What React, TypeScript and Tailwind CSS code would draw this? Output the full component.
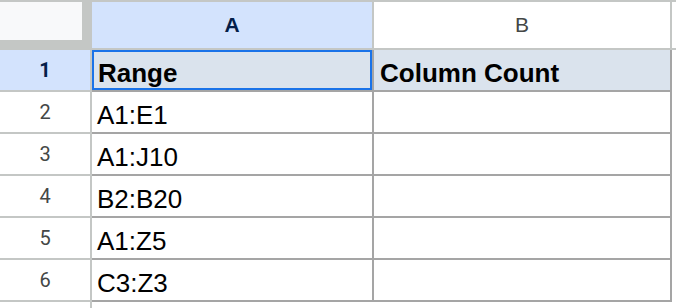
import React from 'react';

const rows = [
  { n: 2, range: 'A1:E1' },
  { n: 3, range: 'A1:J10' },
  { n: 4, range: 'B2:B20' },
  { n: 5, range: 'A1:Z5' },
  { n: 6, range: 'C3:Z3' },
];

const cellText = "font-['Liberation_Sans',Arial,sans-serif] text-[26px] leading-[30px] text-black";

export default function App() {
  return (
    <div className="w-[676px] h-[308px] overflow-hidden bg-white font-['Liberation_Sans',Arial,sans-serif]">
      {/* column headers */}
      <div className="flex h-[50px] border-t-2 border-[#c4c7c5]">
        <div className="w-[92px] shrink-0 bg-[#c4c7c5]">
          <div className="w-[82px] h-[38px] bg-[#f8f9fa]" />
        </div>
        <div className="w-[282px] shrink-0 flex items-center justify-center bg-[#d3e3fd] border-r-2 border-b-2 border-[#c4c7c5] text-[21px] font-bold text-[#041e49]">
          A
        </div>
        <div className="w-[298px] shrink-0 flex items-center justify-center bg-white border-r-2 border-b-2 border-[#c4c7c5] text-[21px] text-[#444746]">
          B
        </div>
        <div className="flex-1 border-b-2 border-[#c4c7c5]" />
      </div>

      {/* header row of data */}
      <div className="flex h-[42px]">
        <div className="w-[92px] shrink-0 flex items-center justify-center bg-[#d3e3fd] border-r-2 border-b-2 border-[#c4c7c5] font-['Roboto',sans-serif] text-[20px] font-bold text-[#041e49]">
          1
        </div>
        <div className={`relative w-[282px] shrink-0 flex items-end pb-[2px] pl-[6px] bg-[#dae3ed] border-r-2 border-b-2 border-[#a5a5a5] font-bold ${cellText}`}>
          Range
          <div className="absolute inset-0 border-2 border-[#1a73e8]" />
        </div>
        <div className={`w-[298px] shrink-0 flex items-end pb-[2px] pl-[6px] bg-[#dae3ed] border-r-2 border-b-2 border-[#a5a5a5] font-bold ${cellText}`}>
          Column Count
        </div>
        <div className="flex-1" />
      </div>

      {rows.map((r) => (
        <div key={r.n} className="flex h-[42px]">
          <div className="w-[92px] shrink-0 flex items-center justify-center border-r-2 border-b-2 border-[#c4c7c5] font-['Roboto',sans-serif] text-[20px] text-[#444746]">
            {r.n}
          </div>
          <div className={`w-[282px] shrink-0 flex items-end pb-[2px] pl-[5px] border-r-2 border-b-2 border-[#a5a5a5] ${cellText}`}>
            {r.range}
          </div>
          <div className="w-[298px] shrink-0 border-r-2 border-b-2 border-[#a5a5a5]" />
          <div className="flex-1" />
        </div>
      ))}

      <div className="flex h-[20px]">
        <div className="w-[92px] shrink-0 border-r-2 border-[#c4c7c5]" />
      </div>
    </div>
  );
}
